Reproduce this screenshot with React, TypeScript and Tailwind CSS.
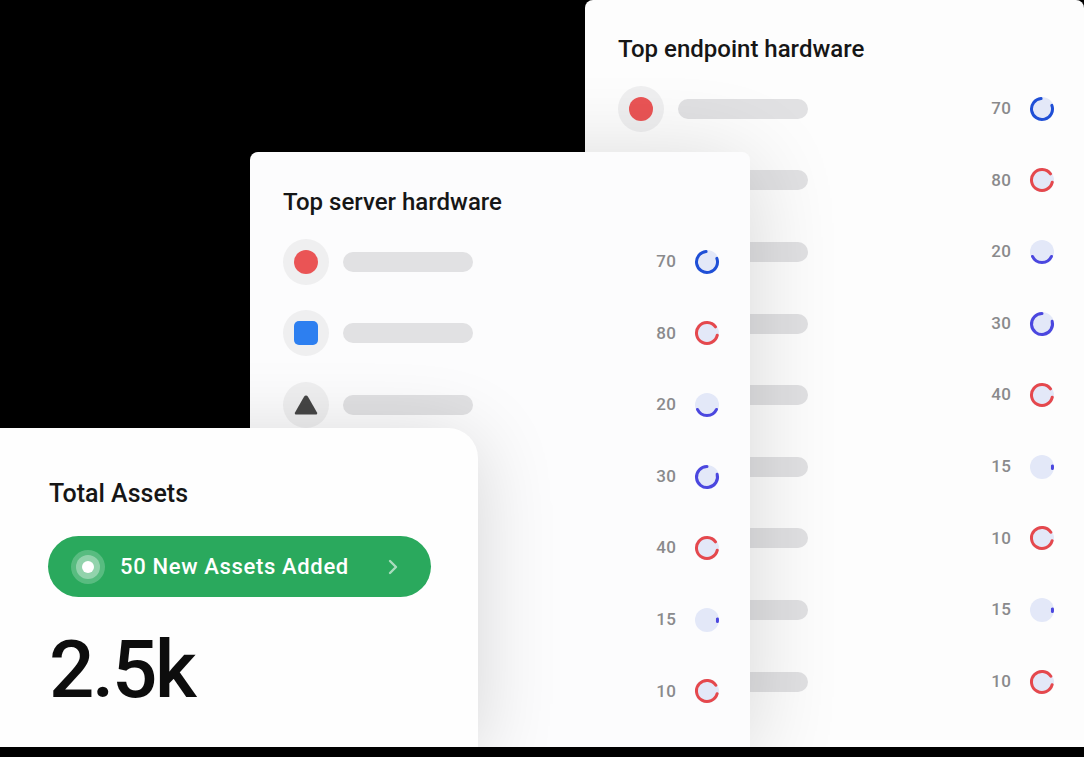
import React from "react";

type ArcSpec = { color: string; start: number; sweep: number };

const BLUE = "#1f4fd6";
const RED = "#e5484d";
const PURPLE = "#4b47df";

const arcs: Record<string, ArcSpec> = {
  "70": { color: BLUE, start: -20, sweep: 285 },
  "80": { color: RED, start: 12, sweep: 312 },
  "20": { color: PURPLE, start: 25, sweep: 130 },
  "30": { color: PURPLE, start: -15, sweep: 285 },
  "40": { color: RED, start: 12, sweep: 312 },
  "15": { color: PURPLE, start: -6, sweep: 14 },
  "10": { color: RED, start: 15, sweep: 312 },
};

function arcPath(cx: number, cy: number, r: number, start: number, sweep: number) {
  const a0 = (start * Math.PI) / 180;
  const a1 = ((start + sweep) * Math.PI) / 180;
  const x0 = cx + r * Math.cos(a0);
  const y0 = cy + r * Math.sin(a0);
  const x1 = cx + r * Math.cos(a1);
  const y1 = cy + r * Math.sin(a1);
  const large = sweep > 180 ? 1 : 0;
  return `M ${x0.toFixed(2)} ${y0.toFixed(2)} A ${r} ${r} 0 ${large} 1 ${x1.toFixed(2)} ${y1.toFixed(2)}`;
}

function Ring({ value }: { value: string }) {
  const a = arcs[value];
  return (
    <svg width="26" height="26" viewBox="0 0 26 26" className="shrink-0">
      <circle cx="13" cy="13" r="12" fill="#e3e8f8" />
      <path d={arcPath(13, 13, 10.5, a.start, a.sweep)} fill="none" stroke={a.color} strokeWidth="3" strokeLinecap="round" />
    </svg>
  );
}

function Icon({ kind }: { kind: "circle" | "square" | "triangle" }) {
  return (
    <div className="w-[46px] h-[46px] rounded-full bg-[#efeff0] flex items-center justify-center shrink-0">
      {kind === "circle" && <div className="w-[24px] h-[24px] rounded-full bg-[#ea5455]" />}
      {kind === "square" && <div className="w-[24px] h-[24px] rounded-[5px] bg-[#2d7ff0]" />}
      {kind === "triangle" && (
        <svg width="26" height="24" viewBox="0 0 26 24">
          <path d="M13 2.5 Q14.2 2.5 15 3.8 L24 19.5 Q24.8 21.5 22.6 21.5 L3.4 21.5 Q1.2 21.5 2 19.5 L11 3.8 Q11.8 2.5 13 2.5 Z" fill="#454545" />
        </svg>
      )}
    </div>
  );
}

function Row({ value, kind }: { value: string; kind: "circle" | "square" | "triangle" }) {
  return (
    <div className="h-[71.6px] flex items-center">
      <Icon kind={kind} />
      <div className="ml-[14px] w-[130px] h-[20px] rounded-full bg-[#e1e1e3]" />
      <div className="ml-auto text-[17px] font-medium text-[#8a8a8c] tracking-[0.01em]">{value}</div>
      <div className="ml-[18px]">
        <Ring value={value} />
      </div>
    </div>
  );
}

const FONT = { fontFamily: "Roboto, 'Noto Sans', sans-serif" };

export default function App() {
  const endpoint = ["70", "80", "20", "30", "40", "15", "10", "15", "10"];
  const server = ["70", "80", "20", "30", "40", "15", "10"];
  const serverIcons: ("circle" | "square" | "triangle")[] = ["circle", "square", "triangle", "circle", "square", "triangle", "circle"];
  return (
    <div className="relative w-[1084px] h-[757px] bg-black overflow-hidden" style={FONT}>
      {/* Endpoint card */}
      <div className="absolute left-[585px] top-0 w-[499px] h-[747px] bg-[#fdfdfd] rounded-t-[8px] pl-[33px] pr-[29px] pt-[35px]">
        <div className="text-[24px] leading-[28px] font-medium text-[#161616]">Top endpoint hardware</div>
        <div className="mt-[10px] flex flex-col">
          {endpoint.map((v, i) => (
            <Row key={i} value={v} kind="circle" />
          ))}
        </div>
      </div>

      {/* Server card */}
      <div className="absolute left-[250px] top-[152px] w-[500px] h-[595px] bg-[#fcfcfd] rounded-t-[8px] pl-[33px] pr-[30px] pt-[36px] shadow-[0_10px_90px_rgba(0,0,0,0.16)]">
        <div className="text-[24px] leading-[28px] font-medium text-[#161616]">Top server hardware</div>
        <div className="mt-[10px] flex flex-col">
          {server.map((v, i) => (
            <Row key={i} value={v} kind={serverIcons[i]} />
          ))}
        </div>
      </div>

      {/* Total assets card */}
      <div className="absolute left-0 top-[428px] w-[478px] h-[319px] bg-[#fefefe] rounded-tr-[30px] pl-[49px] pt-[51px] shadow-[0_10px_80px_rgba(0,0,0,0.16)]">
        <div className="text-[25px] leading-[30px] font-medium text-[#161616]">Total Assets</div>
        <div className="mt-[27px] w-[383px] h-[61px] -ml-[1px] rounded-full bg-[#2aa95d] flex items-center pl-[23px] pr-[32px]">
          <div className="w-[34px] h-[34px] rounded-full bg-[rgba(255,255,255,0.22)] flex items-center justify-center">
            <div className="w-[24px] h-[24px] rounded-full bg-[rgba(255,255,255,0.35)] flex items-center justify-center">
              <div className="w-[12px] h-[12px] rounded-full bg-white" />
            </div>
          </div>
          <div className="ml-[15px] text-[22px] font-medium text-white tracking-[0.03em]">50 New Assets Added</div>
          <svg className="ml-auto" width="12" height="18" viewBox="0 0 12 18">
            <path d="M3 3 L9 9 L3 15" fill="none" stroke="rgba(255,255,255,0.6)" strokeWidth="2.4" strokeLinecap="round" strokeLinejoin="round" />
          </svg>
        </div>
        <div className="mt-[31px] text-[80px] leading-[84px] font-medium text-[#0d0d0d] tracking-[-0.03em]">2.5k</div>
      </div>
    </div>
  );
}
